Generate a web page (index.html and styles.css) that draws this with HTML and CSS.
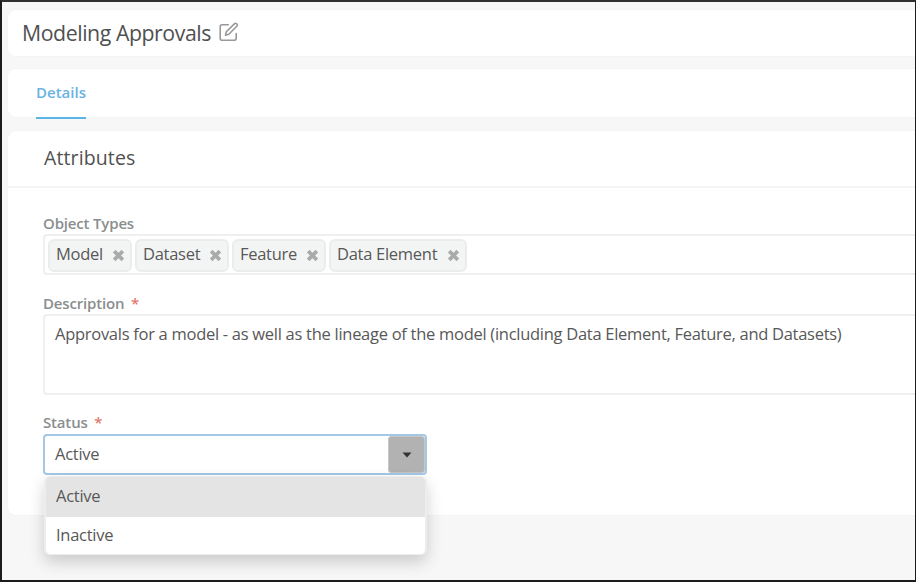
FILE: index.html
```
<!DOCTYPE html>
<html lang="en">
<head>
<meta charset="utf-8">
<title>Modeling Approvals</title>
<link rel="stylesheet" href="styles.css">
</head>
<body>
<main class="page">
  <header class="card title-card">
    <h1 class="title">Modeling Approvals</h1>
    <svg class="edit" viewBox="0 0 20 20" width="20" height="20" fill="none" stroke="#999" stroke-width="1.6" stroke-linecap="round" stroke-linejoin="round"><path d="M9.3 2.7H3.2Q1.2 2.7 1.2 4.7V16.3Q1.2 18.3 3.2 18.3H15.2Q17.2 18.3 17.2 16.3V11.5"/><path d="M6.5 13.2L7.3 9.8L15.6 1.6Q16.6 .8 17.7 1.8Q18.9 2.9 18 4L9.8 12.3Z"/></svg>
  </header>
  <nav class="card tabs"><a class="tab">Details</a></nav>
  <section class="card attributes">
    <h2 class="heading">Attributes</h2>
    <div class="form">
      <div class="label">Object Types</div>
      <div class="box tags">
        <span class="tag tag-model">Model<svg class="x" viewBox="0 0 12 12"><path d="M2 2L10 10M10 2L2 10"/></svg></span>
        <span class="tag tag-dataset">Dataset<svg class="x" viewBox="0 0 12 12"><path d="M2 2L10 10M10 2L2 10"/></svg></span>
        <span class="tag tag-feature">Feature<svg class="x" viewBox="0 0 12 12"><path d="M2 2L10 10M10 2L2 10"/></svg></span>
        <span class="tag tag-element">Data Element<svg class="x" viewBox="0 0 12 12"><path d="M2 2L10 10M10 2L2 10"/></svg></span>
      </div>
      <div class="label">Description <span class="required">*</span></div>
      <div class="box description">Approvals for a model - as well as the lineage of the model (including Data Element, Feature, and Datasets)</div>
      <div class="label">Status <span class="required">*</span></div>
      <div class="select">
        <span class="value">Active</span>
        <span class="toggle"><svg width="10" height="6" viewBox="0 0 10 6"><path d="M.5 .5H9.5L5 5.5Z" fill="#333"/></svg></span>
        <div class="menu">
          <div class="option selected">Active</div>
          <div class="option">Inactive</div>
        </div>
      </div>
    </div>
  </section>
</main>
</body>
</html>
```

FILE: styles.css
```
* { box-sizing: border-box; }
body { margin: 0; }
.page {
  width: 916px;
  height: 582px;
  overflow: hidden;
  padding: 7px 0 0 5px;
  border: 2px solid #1c1c1c;
  border-top-color: #303030;
  border-right-width: 1px;
  background: #f7f7f7;
  font-family: "Open Sans", sans-serif;
  font-size: 16.5px;
  letter-spacing: -.28px;
  color: #585858;
  white-space: nowrap;
}
.card {
  background: #fff;
  border: 1px solid #f4f4f4;
  border-right: 0;
  border-radius: 9px 0 0 9px;
}
.title-card {
  display: flex;
  height: 48px;
  padding-left: 14px;
}
.title {
  margin: 0;
  font-size: 21.3px;
  font-weight: 400;
  letter-spacing: -.44px;
  line-height: 45px;
  color: #505050;
}
.edit { margin: 12px 0 0 8px; }
.tabs {
  height: 50px;
  margin-top: 11px;
  padding-left: 28px;
}
.tab {
  display: inline-block;
  height: 50px;
  border-bottom: 2px solid #5ab4e5;
  color: #69b3e3;
  font-size: 15px;
  font-weight: 600;
  letter-spacing: 0;
  line-height: 46px;
}
.attributes { height: 386px; margin-top: 12px; }
.heading {
  height: 57px;
  margin: 0;
  padding-left: 36px;
  border-bottom: 2px solid #f4f4f4;
  font-size: 19.5px;
  font-weight: 400;
  letter-spacing: .12px;
  line-height: 53px;
  color: #505050;
}
.form { padding: 26px 0 0 35px; }
.label {
  height: 20px;
  font-size: 15px;
  font-weight: 600;
  letter-spacing: -.17px;
  line-height: 18px;
  color: #8a8e8e;
}
.required { margin-left: 3px; color: #e3796d; }
.box {
  border: 2px solid #efefef;
  border-right: 0;
  border-radius: 4px 0 0 4px;
}
.tags {
  display: flex;
  gap: 3px;
  height: 41px;
  margin-bottom: 19px;
  padding: 3px;
}
.tag {
  display: flex;
  justify-content: space-between;
  height: 33px;
  padding: 0 5px 0 6px;
  border: 2px solid #ebeded;
  border-radius: 6px;
  background: #f3f5f5;
  line-height: 25px;
}
.tag-model { width: 84px; }
.tag-dataset { width: 94px; }
.tag-feature { width: 94px; }
.tag-element { width: 138px; }
.x {
  width: 13px;
  height: 13px;
  margin-top: 8px;
  stroke: #aaa;
  stroke-width: 3.4;
}
.description {
  height: 81px;
  margin-bottom: 18px;
  padding-left: 10px;
  line-height: 36px;
}
.select {
  position: relative;
  display: flex;
  justify-content: space-between;
  width: 384px;
  height: 41px;
  margin-top: 1px;
  padding-left: 10px;
  border: 2px solid #a4c8e4;
  border-radius: 4px;
  line-height: 36px;
}
.toggle {
  display: flex;
  align-items: center;
  justify-content: center;
  width: 37px;
  border: 1px solid #c6c6c6;
  border-radius: 3px;
  background: #b2b2b2;
}
.menu {
  position: absolute;
  top: 40px;
  left: -1px;
  width: 383px;
  height: 79px;
  border: 1px solid #eceeee;
  border-width: 1px 2px;
  border-radius: 6px;
  background: #fff;
  box-shadow: 0 7px 16px rgba(0, 0, 0, .18);
  overflow: hidden;
}
.option { height: 38px; padding-left: 10px; line-height: 35px; }
.selected { height: 40px; background: #e4e4e4; line-height: 38px; }
```
